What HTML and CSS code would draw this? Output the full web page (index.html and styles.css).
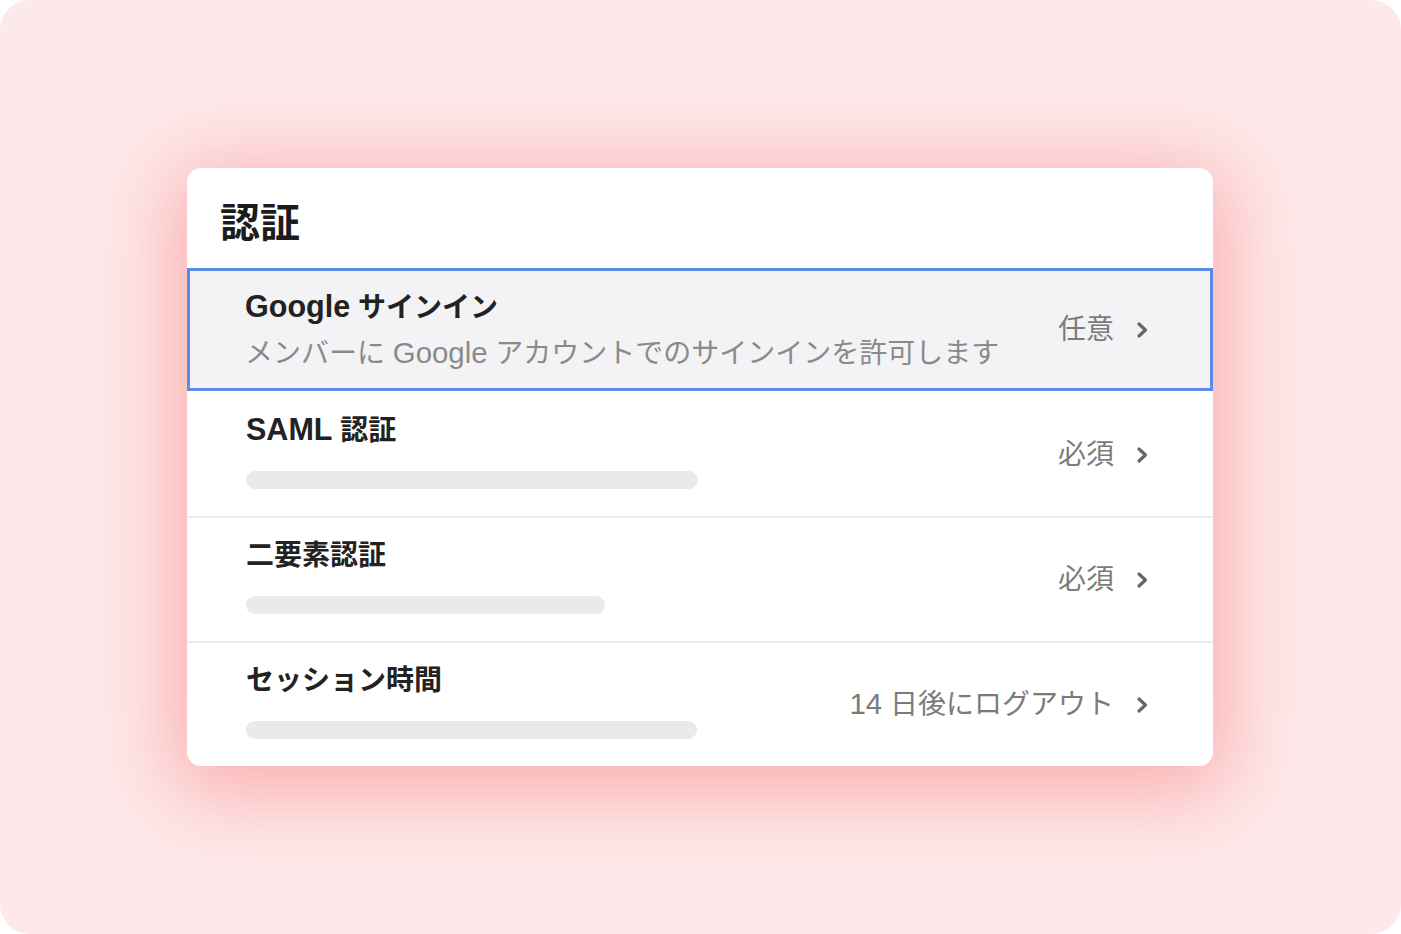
FILE: index.html
```html
<!DOCTYPE html>
<html lang="ja">
<head>
<meta charset="utf-8">
<title>認証</title>
<link rel="stylesheet" href="styles.css">
</head>
<body>
<div class="page">
  <section class="card">
    <header class="card-head">
      <h1 class="card-title">認証</h1>
    </header>
    <div class="row row-selected">
      <div class="row-main">
        <div class="row-title"><span class="latin">Google</span> サインイン</div>
        <div class="row-desc">メンバーに <span class="latin">Google</span> アカウントでのサインインを許可します</div>
      </div>
      <div class="row-side">
        <span class="row-value">任意</span>
        <svg class="chev" viewBox="0 0 12 18" width="12" height="18"><path d="M3 3 L9.5 9 L3 15" /></svg>
      </div>
    </div>
    <div class="row row-plain row-after-selected">
      <div class="row-main">
        <div class="row-title"><span class="latin">SAML</span> 認証</div>
        <div class="bar" style="width:452px"></div>
      </div>
      <div class="row-side">
        <span class="row-value">必須</span>
        <svg class="chev" viewBox="0 0 12 18" width="12" height="18"><path d="M3 3 L9.5 9 L3 15" /></svg>
      </div>
    </div>
    <div class="row row-plain">
      <div class="row-main">
        <div class="row-title">二要素認証</div>
        <div class="bar" style="width:359px"></div>
      </div>
      <div class="row-side">
        <span class="row-value">必須</span>
        <svg class="chev" viewBox="0 0 12 18" width="12" height="18"><path d="M3 3 L9.5 9 L3 15" /></svg>
      </div>
    </div>
    <div class="row row-plain">
      <div class="row-main">
        <div class="row-title">セッション時間</div>
        <div class="bar" style="width:451px"></div>
      </div>
      <div class="row-side">
        <span class="row-value"><span class="latin">14</span> 日後にログアウト</span>
        <svg class="chev" viewBox="0 0 12 18" width="12" height="18"><path d="M3 3 L9.5 9 L3 15" /></svg>
      </div>
    </div>
  </section>
</div>
</body>
</html>
```
FILE: styles.css
```css
html, body {
  margin: 0;
  padding: 0;
  background: #ffffff;
}
body {
  font-family: "Liberation Sans", "Noto Sans CJK JP", sans-serif;
  color: #1e1e1e;
}
.page {
  width: 1401px;
  height: 934px;
  box-sizing: border-box;
  padding-left: 187px;
  border-radius: 30px;
  background: #fee9ea;
  display: flex;
  align-items: center;
  overflow: hidden;
}
.card {
  width: 1026px;
  background: #ffffff;
  border-radius: 14px;
  box-shadow: 0 14px 80px 16px rgba(248, 135, 135, 0.58);
  overflow: hidden;
}
.card-head {
  height: 100px;
  box-sizing: border-box;
  padding: 31px 33px 0;
}
.card-title {
  margin: 0;
  font-size: 40px;
  line-height: 48px;
  font-weight: 700;
  color: #1c1c1c;
}
.row {
  display: flex;
  align-items: center;
  justify-content: space-between;
  box-sizing: border-box;
}
.row-selected {
  height: 123px;
  border: 3px solid #5b8ce9;
  background: #f3f2f4;
  padding: 0 62px 0 55px;
}
.row-selected .row-main {
  align-self: flex-start;
  padding-top: 20px;
}
.row-plain {
  height: 125px;
  border-top: 2px solid #ececec;
  padding: 0 65px 0 59px;
}
.row-after-selected {
  border-top-color: #ffffff;
}
.row-plain .row-main {
  align-self: flex-start;
  padding-top: 21px;
}
.row-title {
  font-size: 28px;
  line-height: 34px;
  font-weight: 700;
  color: #222222;
  white-space: nowrap;
}
.row-title .latin {
  font-size: 1.09em;
  line-height: 1;
}
.row-desc {
  margin-top: 9px;
  font-size: 28px;
  line-height: 40px;
  color: #8a8a8a;
  white-space: nowrap;
}
.row-desc .latin,
.row-value .latin {
  font-size: 1.05em;
  line-height: 1;
}
.bar {
  margin-top: 23px;
  height: 18px;
  border-radius: 9px;
  background: #ebeae8;
}
.row-side {
  display: flex;
  align-items: center;
  gap: 22px;
}
.row-value {
  font-size: 28px;
  line-height: 34px;
  color: #7b7b7b;
  white-space: nowrap;
}
.chev {
  display: block;
}
.chev path {
  fill: none;
  stroke: #666666;
  stroke-width: 3.2;
  stroke-linecap: round;
  stroke-linejoin: round;
}
```
